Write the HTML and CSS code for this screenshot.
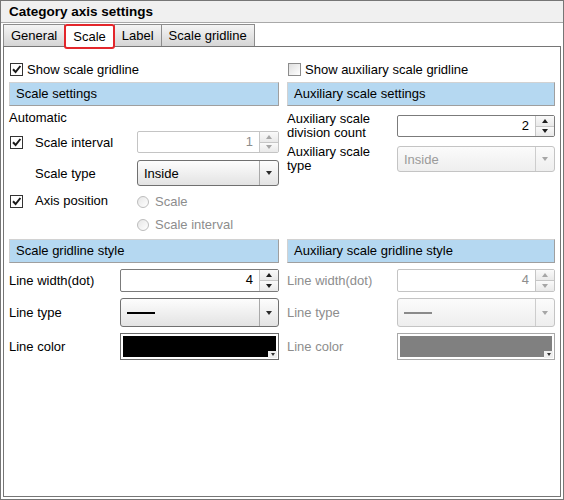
FILE: index.html
```html
<!DOCTYPE html>
<html lang="en">
<head>
    <meta charset="UTF-8">
    <title>Category axis settings</title>
    <link rel="stylesheet" href="styles.css">
</head>
<body>
    <div class="dialog">
        <div class="title-bar">Category axis settings</div>

        <div class="dialog-body">
            <div class="tabs">
                <div class="tab">General</div>
                <div class="tab active">Scale</div>
                <div class="tab">Label</div>
                <div class="tab">Scale gridline</div>
            </div>

            <div class="tab-panel">
                <div class="columns">
                    <!-- main scale -->
                    <div class="column">
                        <div class="check-row">
                            <span class="checkbox checked"><svg viewBox="0 0 11 11" width="11" height="11"><path d="M2 5.2l2.6 2.8L9.4 2" fill="none" stroke="#1a1a1a" stroke-width="2"/></svg></span>
                            Show scale gridline
                        </div>
                        <div class="section-title">Scale settings</div>

                        <div class="settings">
                            <div class="plain-label">Automatic</div>

                            <div class="setting-row">
                                <span class="checkbox checked"><svg viewBox="0 0 11 11" width="11" height="11"><path d="M2 5.2l2.6 2.8L9.4 2" fill="none" stroke="#1a1a1a" stroke-width="2"/></svg></span>
                                <span class="row-label">Scale interval</span>
                                <div class="spinner disabled">
                                    <span class="spin-value">1</span>
                                    <span class="spin-buttons"><span class="spin-up"></span><span class="spin-down"></span></span>
                                </div>
                            </div>

                            <div class="setting-row tall">
                                <span></span>
                                <span class="row-label">Scale type</span>
                                <div class="select">
                                    <span class="select-value">Inside</span>
                                    <span class="select-arrow"></span>
                                </div>
                            </div>

                            <div class="setting-row top">
                                <span class="checkbox checked"><svg viewBox="0 0 11 11" width="11" height="11"><path d="M2 5.2l2.6 2.8L9.4 2" fill="none" stroke="#1a1a1a" stroke-width="2"/></svg></span>
                                <span class="row-label">Axis position</span>
                                <div class="radio-group">
                                    <div class="radio-option"><span class="radio"></span>Scale</div>
                                    <div class="radio-option"><span class="radio"></span>Scale interval</div>
                                </div>
                            </div>
                        </div>

                        <div class="section-title">Scale gridline style</div>

                        <div class="line-row">
                            <span>Line width(dot)</span>
                            <div class="spinner high">
                                <span class="spin-value">4</span>
                                <span class="spin-buttons"><span class="spin-up"></span><span class="spin-down"></span></span>
                            </div>
                        </div>
                        <div class="line-row">
                            <span>Line type</span>
                            <div class="select line-select">
                                <span class="select-value"><span class="line-sample"></span></span>
                                <span class="select-arrow"></span>
                            </div>
                        </div>
                        <div class="line-row">
                            <span>Line color</span>
                            <div class="color-box">
                                <span class="swatch"></span>
                                <span class="color-drop"></span>
                            </div>
                        </div>
                    </div>

                    <!-- auxiliary scale -->
                    <div class="column aux">
                        <div class="check-row">
                            <span class="checkbox"></span>
                            Show auxiliary scale gridline
                        </div>
                        <div class="section-title">Auxiliary scale settings</div>

                        <div class="settings">
                            <div class="aux-row">
                                <span class="two-line">Auxiliary scale<br>division count</span>
                                <div class="spinner">
                                    <span class="spin-value">2</span>
                                    <span class="spin-buttons"><span class="spin-up"></span><span class="spin-down"></span></span>
                                </div>
                            </div>
                            <div class="aux-row">
                                <span class="two-line">Auxiliary scale<br>type</span>
                                <div class="select disabled">
                                    <span class="select-value">Inside</span>
                                    <span class="select-arrow"></span>
                                </div>
                            </div>
                        </div>

                        <div class="section-title">Auxiliary scale gridline style</div>

                        <div class="line-row off">
                            <span>Line width(dot)</span>
                            <div class="spinner high disabled">
                                <span class="spin-value">4</span>
                                <span class="spin-buttons"><span class="spin-up"></span><span class="spin-down"></span></span>
                            </div>
                        </div>
                        <div class="line-row off">
                            <span>Line type</span>
                            <div class="select line-select disabled">
                                <span class="select-value"><span class="line-sample"></span></span>
                                <span class="select-arrow"></span>
                            </div>
                        </div>
                        <div class="line-row off">
                            <span>Line color</span>
                            <div class="color-box disabled">
                                <span class="swatch"></span>
                                <span class="color-drop"></span>
                            </div>
                        </div>
                    </div>
                </div>
            </div>
        </div>
    </div>
</body>
</html>
```

FILE: styles.css
```css
body {
    margin: 0;
    font-family: "Liberation Sans", Arial, sans-serif;
    font-size: 13px;
    color: #000;
    background: #fff;
}

.dialog {
    width: 564px;
    height: 500px;
    box-sizing: border-box;
    border: 1px solid #767676;
    display: flex;
    flex-direction: column;
}

.title-bar {
    height: 21px;
    line-height: 21px;
    padding-left: 8px;
    background: #f0f0f0;
    border-bottom: 1px solid #a9a9a9;
    font-weight: bold;
    font-size: 13.5px;
}

.dialog-body {
    flex: 1;
    display: flex;
    flex-direction: column;
    padding: 1px 2px 2px 2px;
}

/* tabs */
.tabs {
    display: flex;
    height: 22px;
}

.tab {
    height: 22px;
    box-sizing: border-box;
    padding: 0 7px;
    margin-left: -1px;
    line-height: 21px;
    border: 1px solid #8d8d8d;
    border-bottom: none;
    background: linear-gradient(#f5f5f5, #d5d5d5);
}

.tab:first-child {
    margin-left: 0;
}

.tab.active {
    position: relative;
    z-index: 1;
    height: 25px;
    margin-bottom: -3px;
    line-height: 21px;
    background: #fff;
    border: 2px solid #e3262b;
    border-radius: 3px;
}

.tab-panel {
    flex: 1;
    border: 1px solid #767676;
    padding: 12px 5px 0;
}

.columns {
    display: grid;
    grid-template-columns: 270px 268px;
    column-gap: 8px;
}

.column {
    display: flex;
    flex-direction: column;
}

/* checkbox / radio */
.checkbox {
    width: 13px;
    height: 13px;
    box-sizing: border-box;
    margin-left: 1px;
    border: 1px solid #8c8c8c;
    background: linear-gradient(135deg, #dedede, #fff);
    display: inline-flex;
    align-items: center;
    justify-content: center;
}

.checkbox.checked {
    border-color: #333;
    background: #fff;
}

.check-row {
    height: 23px;
    padding-bottom: 3px;
    box-sizing: border-box;
    display: flex;
    align-items: center;
    gap: 4px;
}

.radio {
    width: 12px;
    height: 12px;
    box-sizing: border-box;
    border: 1px solid #bcbcbc;
    border-radius: 50%;
    background: linear-gradient(135deg, #e6e6e6, #fff);
}

.radio-option {
    height: 23px;
    display: flex;
    align-items: center;
    gap: 6px;
    color: #8d8d8d;
}

/* section bars */
.section-title {
    height: 24px;
    box-sizing: border-box;
    padding-left: 6px;
    line-height: 22px;
    background: #b5d8f1;
    border: 1px solid #d2d2d2;
    border-right-color: #9f9f9f;
    border-bottom-color: #9f9f9f;
}

.settings {
    height: 133px;
    display: flex;
    flex-direction: column;
}

.plain-label {
    height: 24px;
    line-height: 24px;
}

.setting-row {
    display: grid;
    grid-template-columns: 26px 102px 1fr;
    align-items: center;
    height: 24px;
}

.setting-row.tall {
    height: 28px;
    margin-top: 5px;
}

.setting-row.top {
    align-items: start;
    margin-top: 3px;
    height: auto;
}

.setting-row.top .checkbox {
    margin-top: 5px;
}

.setting-row.top .row-label {
    margin-top: 3px;
}

.aux-row {
    display: grid;
    grid-template-columns: 110px 1fr;
    align-items: center;
    margin-top: 6px;
}

.aux-row + .aux-row {
    margin-top: 5px;
}

.two-line {
    line-height: 14px;
}

.line-row {
    display: grid;
    grid-template-columns: 111px 1fr;
    align-items: center;
    margin-top: 6px;
}

.aux .line-row {
    grid-template-columns: 110px 1fr;
}

.off {
    color: #8d8d8d;
}

/* spinner */
.spinner {
    display: flex;
    height: 22px;
    box-sizing: border-box;
    border: 1px solid #7b7b7b;
    border-radius: 2px;
    background: #fff;
}

.spinner.high {
    height: 23px;
}

.spin-value {
    flex: 1;
    text-align: right;
    padding-right: 6px;
    line-height: 20px;
}

.spin-buttons {
    width: 18px;
    display: flex;
    flex-direction: column;
    border-left: 1px solid #c6c6c6;
}

.spin-buttons span {
    flex: 1;
    display: flex;
    align-items: center;
    justify-content: center;
    background: linear-gradient(#fafafa, #e9e9e9);
}

.spin-up {
    border-bottom: 1px solid #c6c6c6;
}

.spin-up::before,
.spin-down::before {
    content: "";
    border-left: 3.5px solid transparent;
    border-right: 3.5px solid transparent;
}

.spin-up::before {
    border-bottom: 4px solid #1e1e1e;
}

.spin-down::before {
    border-top: 4px solid #1e1e1e;
}

.spinner.disabled {
    border-color: #c4c4c4;
    color: #8d8d8d;
}

.spinner.disabled .spin-up::before {
    border-bottom-color: #a6a6a6;
}

.spinner.disabled .spin-down::before {
    border-top-color: #a6a6a6;
}

/* dropdown */
.select {
    display: flex;
    height: 26px;
    box-sizing: border-box;
    border: 1px solid #707070;
    border-radius: 3px;
    background: linear-gradient(#fdfdfd, #e3e3e3);
}

.select.line-select {
    height: 29px;
}

.select-value {
    flex: 1;
    display: flex;
    align-items: center;
    padding-left: 6px;
}

.select-arrow {
    width: 18px;
    border-left: 1px solid #a9a9a9;
    display: flex;
    align-items: center;
    justify-content: center;
}

.select-arrow::before {
    content: "";
    border-left: 3.5px solid transparent;
    border-right: 3.5px solid transparent;
    border-top: 4px solid #2a2a2a;
}

.select.disabled {
    border-color: #c4c4c4;
    background: linear-gradient(#fbfbfb, #eeeeee);
    color: #9a9a9a;
}

.select.disabled .select-arrow {
    border-left-color: #cdcdcd;
}

.select.disabled .select-arrow::before {
    border-top-color: #a6a6a6;
}

.line-sample {
    width: 28px;
    height: 2px;
    background: #000;
}

.select.disabled .line-sample {
    background: #8a8a8a;
}

/* colour picker */
.color-box {
    position: relative;
    height: 27px;
    box-sizing: border-box;
    padding: 2px;
    border: 1px solid #6b6b6b;
    background: #fff;
}

.swatch {
    display: block;
    height: 100%;
    background: #000;
}

.color-box.disabled {
    border-color: #a9a9a9;
}

.color-box.disabled .swatch {
    background: #808080;
}

.color-drop {
    position: absolute;
    right: 1px;
    bottom: 1px;
    width: 9px;
    height: 7px;
    display: flex;
    align-items: center;
    justify-content: center;
    background: #efefef;
}

.color-drop::before {
    content: "";
    border-left: 2.5px solid transparent;
    border-right: 2.5px solid transparent;
    border-top: 3px solid #333;
}
```
